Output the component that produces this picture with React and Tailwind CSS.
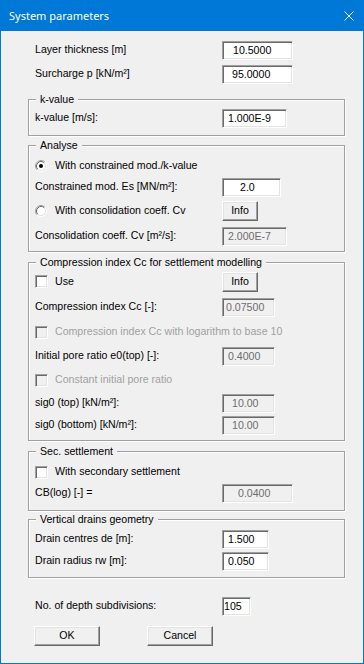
import React from "react";

const inputBase =
  "h-[19px] shrink-0 flex items-center border border-t-[#a0a0a0] border-l-[#a0a0a0] border-b-white border-r-white shadow-[inset_1px_1px_0_#696969,inset_-1px_-1px_0_#e3e3e3] leading-none whitespace-pre";

function Inp({ cls, val, disabled }) {
  return (
    <div className={`${inputBase} ${cls} ${disabled ? "bg-[#f0f0f0] text-[#6d6d6d]" : "bg-white text-black"}`}>
      {val}
    </div>
  );
}

function Row({ h, label, children, labelCls = "" }) {
  return (
    <div className={`flex items-center ${h}`}>
      <div className={`w-[187px] shrink-0 whitespace-nowrap ${labelCls}`}>{label}</div>
      {children}
    </div>
  );
}

function Check({ disabled }) {
  return (
    <div
      className={`w-[13px] h-[13px] shrink-0 border border-t-[#a0a0a0] border-l-[#a0a0a0] border-b-white border-r-white shadow-[inset_1px_1px_0_#696969,inset_-1px_-1px_0_#e3e3e3] ${
        disabled ? "bg-[#f0f0f0]" : "bg-white"
      }`}
    />
  );
}

function Radio({ checked }) {
  return (
    <svg width="12" height="12" viewBox="0 0 12 12" className="shrink-0">
      <circle cx="6" cy="6" r="4.5" fill="#ffffff" />
      <path d="M 2.11 9.89 A 5.5 5.5 0 0 1 9.89 2.11" fill="none" stroke="#a0a0a0" strokeWidth="1" />
      <path d="M 9.89 2.11 A 5.5 5.5 0 0 1 2.11 9.89" fill="none" stroke="#ffffff" strokeWidth="1" />
      <path d="M 2.82 9.18 A 4.5 4.5 0 0 1 9.18 2.82" fill="none" stroke="#696969" strokeWidth="1" />
      <path d="M 9.18 2.82 A 4.5 4.5 0 0 1 2.82 9.18" fill="none" stroke="#e3e3e3" strokeWidth="1" />
      {checked && <circle cx="6" cy="6" r="2" fill="#000000" />}
    </svg>
  );
}

function Btn({ cls, children }) {
  return (
    <div
      className={`h-[20px] shrink-0 flex items-center justify-center bg-[#f0f0f0] border border-t-white border-l-white border-b-[#696969] border-r-[#696969] shadow-[inset_-1px_-1px_0_#a0a0a0,inset_1px_1px_0_#e3e3e3] ${cls}`}
    >
      {children}
    </div>
  );
}

function Group({ title, cls, children }) {
  return (
    <div
      className={`relative w-[317px] border border-[#a0a0a0] shadow-[1px_1px_0_#ffffff,inset_1px_1px_0_#ffffff] pl-[6px] ${cls}`}
    >
      <span className="absolute left-[7px] top-[-8px] px-[4px] bg-[#f0f0f0] leading-[14px] whitespace-nowrap">
        {title}
      </span>
      {children}
    </div>
  );
}

export default function App() {
  return (
    <div className="w-[364px] h-[664px] bg-[#f0f0f0] border-x border-b border-[#0078d7] flex flex-col font-['Liberation_Sans',Arial,sans-serif] text-[10.6px] text-black overflow-hidden">
      <div className="h-[31px] shrink-0 bg-[#0078d7] flex items-center justify-between pl-[8px] pr-[9px] text-white">
        <span className="font-['Noto_Sans',sans-serif] text-[11px] leading-none">System parameters</span>
        <svg width="10" height="10" viewBox="0 0 10 10">
          <path d="M0.5 0.5 L9.5 9.5 M9.5 0.5 L0.5 9.5" stroke="#ffffff" strokeWidth="1" />
        </svg>
      </div>

      <div className="flex flex-col pl-[27px]">
        <div className="mt-[7px] pl-[7px]">
          <Row h="h-[24px]" label="Layer thickness [m]">
            <Inp cls="w-[71px] pl-[10px]" val="10.5000" />
          </Row>
          <Row h="h-[24px]" label="Surcharge p [kN/m²]">
            <Inp cls="w-[71px] pl-[9px]" val="95.0000" />
          </Row>
        </div>

        <Group title="k-value" cls="mt-[13px] pt-[6px] pb-[5px]">
          <Row h="h-[24px]" label="k-value [m/s]:">
            <Inp cls="w-[65px] pl-[5px]" val="1.000E-9" />
          </Row>
        </Group>

        <Group title="Analyse" cls="mt-[9px] pt-[10px] pb-[3px]">
          <div className="flex items-center h-[20px] gap-[8px]">
            <Radio checked />
            <span className="whitespace-nowrap">With constrained mod./k-value</span>
          </div>
          <Row h="h-[22px]" label="Constrained mod. Es [MN/m²]:">
            <Inp cls="w-[59px] pl-[17px]" val="2.0" />
          </Row>
          <div className="flex items-center h-[26px]">
            <div className="w-[187px] shrink-0 flex items-center gap-[8px]">
              <Radio />
              <span className="whitespace-nowrap">With consolidation coeff. Cv</span>
            </div>
            <Btn cls="w-[36px]">Info</Btn>
          </div>
          <Row h="h-[24px]" label="Consolidation coeff. Cv [m²/s]:">
            <Inp cls="w-[65px] pl-[5px]" val="2.000E-7" disabled />
          </Row>
        </Group>

        <Group title="Compression index Cc for settlement modelling" cls="mt-[10px] pt-[7px] pb-[4px]">
          <div className="flex items-center h-[24px]">
            <div className="w-[187px] shrink-0 flex items-center gap-[7px]">
              <Check />
              <span>Use</span>
            </div>
            <Btn cls="w-[36px]">Info</Btn>
          </div>
          <Row h="h-[26px]" label="Compression index Cc [-]:">
            <Inp cls="w-[53px] pl-[3px]" val="0.07500" disabled />
          </Row>
          <div className="flex items-center h-[24px] gap-[7px] text-[#a0a0a0]">
            <Check disabled />
            <span className="whitespace-nowrap">Compression index Cc with logarithm to base 10</span>
          </div>
          <Row h="h-[24px]" label="Initial pore ratio e0(top) [-]:">
            <Inp cls="w-[53px] pl-[5px]" val="0.4000" disabled />
          </Row>
          <div className="flex items-center h-[24px] gap-[7px] text-[#a0a0a0]">
            <Check disabled />
            <span className="whitespace-nowrap">Constant initial pore ratio</span>
          </div>
          <Row h="h-[22px]" label="sig0 (top) [kN/m²]:">
            <Inp cls="w-[53px] pl-[9px]" val="10.00" disabled />
          </Row>
          <Row h="h-[22px]" label="sig0 (bottom) [kN/m²]:">
            <Inp cls="w-[53px] pl-[9px]" val="10.00" disabled />
          </Row>
        </Group>

        <Group title="Sec. settlement" cls="mt-[10px] pt-[10px] pb-[6px]">
          <div className="flex items-center h-[20px] gap-[7px]">
            <Check />
            <span className="whitespace-nowrap">With secondary settlement</span>
          </div>
          <Row h="h-[22px]" label="CB(log) [-] =">
            <Inp cls="w-[71px] pl-[15px]" val="0.0400" disabled />
          </Row>
        </Group>

        <Group title="Vertical drains geometry" cls="mt-[8px] pt-[8px] pb-[5px]">
          <Row h="h-[22px]" label="Drain centres de [m]:">
            <Inp cls="w-[47px] pl-[5px]" val="1.500" />
          </Row>
          <Row h="h-[22px]" label="Drain radius rw [m]:">
            <Inp cls="w-[47px] pl-[5px]" val="0.050" />
          </Row>
        </Group>

        <div className="mt-[17px] pl-[7px]">
          <Row h="h-[22px]" label="No. of depth subdivisions:">
            <Inp cls="w-[29px] pl-[1px]" val="105" />
          </Row>
        </div>

        <div className="mt-[9px] pl-[6px] flex">
          <Btn cls="w-[66px]">OK</Btn>
          <Btn cls="w-[66px] ml-[47px]">Cancel</Btn>
        </div>
      </div>
    </div>
  );
}
